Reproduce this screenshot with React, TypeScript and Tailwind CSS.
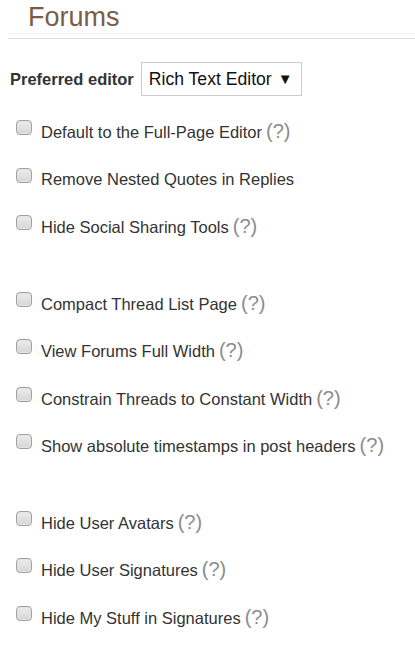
import React from 'react'

type Option = { label: string; help?: boolean }

const groups: Option[][] = [
  [
    { label: 'Default to the Full-Page Editor', help: true },
    { label: 'Remove Nested Quotes in Replies' },
    { label: 'Hide Social Sharing Tools', help: true },
  ],
  [
    { label: 'Compact Thread List Page', help: true },
    { label: 'View Forums Full Width', help: true },
    { label: 'Constrain Threads to Constant Width', help: true },
    { label: 'Show absolute timestamps in post headers', help: true },
  ],
  [
    { label: 'Hide User Avatars', help: true },
    { label: 'Hide User Signatures', help: true },
    { label: 'Hide My Stuff in Signatures', help: true },
  ],
]

function OptionRow({ option }: { option: Option }) {
  return (
    <label className="flex items-start h-[47.5px]">
      {/* checkbox drawn like the old windows control */}
      <span className="mt-[1px] w-[16px] h-[15px] rounded-[4px] border border-[#a0a0a0] bg-gradient-to-b from-[#ececec] to-[#d6d6d6] shadow-[inset_0_0_0_1px_#e4e4e4] flex-shrink-0" />
      <span className="ml-[9px] text-[16.5px] leading-[20px] text-[#333] mt-[2px]">
        {option.label}
        {option.help && (
          <span className="text-[20px] text-[#8c8c8c] ml-[4px] leading-[20px]">(?)</span>
        )}
      </span>
    </label>
  )
}

export default function App() {
  return (
    <div className="bg-white min-h-screen w-[415px] font-['Liberation_Sans',Arial,sans-serif]">
      <div className="pl-[28px] pt-[1px] h-[33px]">
        <h1 className="text-[27px] leading-[32px] text-[#7b5d46]">Forums</h1>
      </div>
      <div className="ml-[8px] border-t border-[#f2f2f2] h-[5px]" />
      <div className="ml-[8px] border-t border-[#dedede]" />

      <div className="pl-[10px] pt-[23px] flex items-center">
        <span className="text-[16.5px] font-bold text-[#333]">Preferred editor</span>
        <div className="ml-[7px] w-[161px] h-[34px] border border-[#cccccc] bg-white flex items-center pl-[7px] text-[17.6px] text-[#111]">
          Rich Text Editor
          <span className="ml-[6px] text-[15px]">▼</span>
        </div>
      </div>

      <div className="pl-[16px] pt-[23px]">
        {groups.map((group, gi) => (
          <div key={gi} className={gi > 0 ? 'mt-[29px]' : ''}>
            {group.map((opt) => (
              <OptionRow key={opt.label} option={opt} />
            ))}
          </div>
        ))}
      </div>
    </div>
  )
}
